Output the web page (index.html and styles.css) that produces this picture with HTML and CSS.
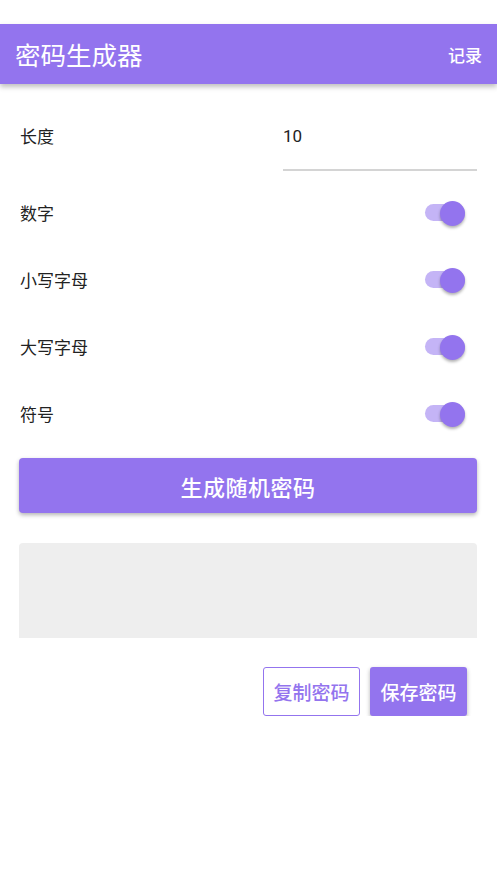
FILE: index.html
```
<!DOCTYPE html>
<html lang="zh">
<head>
    <meta charset="UTF-8">
    <meta name="viewport" content="width=device-width, initial-scale=1.0">
    <title>密码生成器</title>
    <link rel="stylesheet" href="styles.css">
</head>
<body>
    <div class="status-bar"></div>

    <!-- App Bar -->
    <div class="app-bar">
        <span class="app-title">密码生成器</span>
        <span class="app-action">记录</span>
    </div>

    <div class="content">
        <!-- Length -->
        <div class="length-row">
            <span class="label">长度</span>
            <div class="length-input">10</div>
        </div>

        <!-- Options -->
        <div class="option-row">
            <span class="label">数字</span>
            <div class="switch"><div class="thumb"></div></div>
        </div>
        <div class="option-row">
            <span class="label">小写字母</span>
            <div class="switch"><div class="thumb"></div></div>
        </div>
        <div class="option-row">
            <span class="label">大写字母</span>
            <div class="switch"><div class="thumb"></div></div>
        </div>
        <div class="option-row">
            <span class="label">符号</span>
            <div class="switch"><div class="thumb"></div></div>
        </div>

        <button class="generate-btn">生成随机密码</button>

        <div class="result-box"></div>

        <div class="actions">
            <button class="btn-outline">复制密码</button>
            <button class="btn-filled">保存密码</button>
        </div>
    </div>
</body>
</html>
```

FILE: styles.css
```
body {
    font-family: "Noto Sans CJK SC", "Noto Sans", sans-serif;
    margin: 0;
    background-color: #fff;
    color: #222;
}
.status-bar {
    height: 24px;
}
.app-bar {
    height: 60px;
    background-color: #9374ee;
    display: flex;
    align-items: center;
    justify-content: space-between;
    padding: 0 15px;
    color: #fff;
    box-shadow: 0 3px 5px rgba(0, 0, 0, 0.25);
    position: relative;
}
.app-title {
    font-size: 25.5px;
    line-height: 30px;
}
.app-action {
    font-size: 17px;
    font-weight: 500;
}
.content {
    padding: 0 20px 0 19px;
}
.label {
    font-size: 17px;
    line-height: 24px;
    padding-left: 1px;
}
.length-row {
    display: flex;
    align-items: flex-start;
    justify-content: space-between;
    padding-top: 40px;
}
.length-input {
    width: 194px;
    font-family: Roboto, "Noto Sans CJK SC", sans-serif;
    font-size: 17px;
    line-height: 24px;
    padding-bottom: 21px;
    border-bottom: 2px solid #d4d4d4;
}
.option-row {
    height: 67px;
    display: flex;
    align-items: center;
    justify-content: space-between;
}
.length-row + .option-row {
    margin-top: 8px;
}
.switch {
    position: relative;
    width: 40px;
    height: 17px;
    border-radius: 9px;
    background-color: #c4b4f6;
    margin-right: 12px;
}
.thumb {
    position: absolute;
    right: 0;
    top: -3px;
    width: 25px;
    height: 25px;
    border-radius: 50%;
    background-color: #9374ee;
    box-shadow: 0 2px 3px rgba(0, 0, 0, 0.3);
}
.generate-btn {
    display: block;
    width: 100%;
    height: 55px;
    margin-top: 11px;
    border: none;
    border-radius: 4px;
    background-color: #9374ee;
    color: #fff;
    font-family: inherit;
    font-size: 22px;
    font-weight: 500;
    letter-spacing: 0.5px;
    box-shadow: 0 2px 4px rgba(0, 0, 0, 0.3);
}
.result-box {
    height: 95px;
    margin-top: 30px;
    background-color: #eeeeee;
    border-radius: 4px 4px 0 0;
}
.actions {
    display: flex;
    justify-content: flex-end;
    gap: 10px;
    margin-top: 29px;
    padding-right: 10px;
}
.actions button {
    width: 97px;
    height: 49px;
    font-family: inherit;
    font-size: 19px;
    font-weight: 500;
    border-radius: 3px;
    padding: 0;
}
.btn-outline {
    background-color: #fff;
    color: #9374ee;
    border: 1px solid #9374ee;
}
.btn-filled {
    background-color: #9374ee;
    color: #fff;
    border: none;
    box-shadow: 0 2px 4px rgba(0, 0, 0, 0.3);
}
```
